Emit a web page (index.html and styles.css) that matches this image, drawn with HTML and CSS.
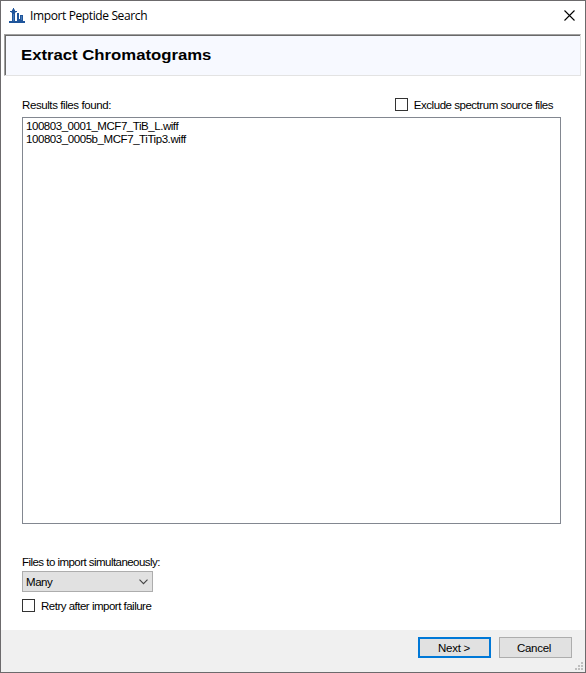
FILE: index.html
```html
<!DOCTYPE html>
<html lang="en">
<head>
<meta charset="utf-8">
<title>Import Peptide Search</title>
<link rel="stylesheet" href="styles.css">
</head>
<body>
<div class="window">
  <header class="titlebar">
    <svg class="app-icon" width="16" height="16" viewBox="0 0 16 16" fill="#1f559b">
      <path d="M4 0h1v1.500h1V3h2v1H6.500v1H6v8h2V5h2v6h1V7h3v6h2v2H0v-2h3V5h-.5V4H1V3h2V1.500h1z"/>
      <path d="M4.500 6v7M12.500 8v4" stroke="#5688c0" stroke-width=".8"/>
    </svg>
    <span class="title">Import Peptide Search</span>
    <svg class="close" width="11" height="11" viewBox="0 0 11 11"><path d="M.5.5l10 10M10.5.5l-10 10" stroke="#000" stroke-width="1.1"/></svg>
  </header>
  <div class="banner"><h1>Extract Chromatograms</h1></div>
  <main>
    <div class="list-head">
      <span class="found">Results files found:</span>
      <label class="check"><i class="box"></i><span class="exclude">Exclude spectrum source files</span></label>
    </div>
    <div class="list">
      <div class="file-a">100803_0001_MCF7_TiB_L.wiff</div>
      <div class="file-b">100803_0005b_MCF7_TiTip3.wiff</div>
    </div>
    <div class="simul"><span>Files to import simultaneously:</span></div>
    <div class="combo"><span>Many</span><svg width="9" height="6" viewBox="0 0 9 6"><path d="M.5.7l4 4 4-4" fill="none" stroke="#444" stroke-width="1.1"/></svg></div>
    <label class="check retry-row"><i class="box"></i><span class="retry">Retry after import failure</span></label>
  </main>
  <footer>
    <div class="button primary"><span>Next &gt;</span></div>
    <div class="button"><span>Cancel</span></div>
    <svg class="grip" width="8" height="8" viewBox="0 0 8 8" fill="#bfbfbf"><path d="M6 0h2v2H6zM3 3h2v2H3zM6 3h2v2H6zM0 6h2v2H0zM3 6h2v2H3zM6 6h2v2H6z"/></svg>
  </footer>
</div>
</body>
</html>
```
FILE: styles.css
```css
* { box-sizing: border-box; }
body { margin: 0; font: 11.5px/13px "Liberation Sans", Arial, sans-serif; color: #000; white-space: nowrap; }
.window { height: 673px; border: 1px solid #6c6a6c; background: #fff; display: flex; flex-direction: column; }
.titlebar { height: 33px; display: flex; align-items: center; padding: 0 10px 4px 8px; }
.app-icon { margin-top: 1px; }
.title { margin-left: 5px; padding-top: 1px; font: 12px/16px "Open Sans", sans-serif; letter-spacing: -.38px; }
.close { margin-left: auto; }
.banner { height: 42px; margin: 0 4px 0 3px; border: 1px solid; border-color: #a0a0a0 #e3e3e3 #e3e3e3 #a0a0a0; box-shadow: inset 1px 1px #696969; background: #f7f9ff; display: flex; align-items: center; padding-left: 16px; }
h1 { margin: 0; font: bold 15px/18px "Liberation Sans", Arial, sans-serif; transform: scaleX(1.114); transform-origin: left; }
main { flex: 1; padding: 22px 24px 0 21px; }
.list-head { display: flex; justify-content: space-between; height: 13px; padding-right: 8px; }
.found { letter-spacing: -.41px; padding-top: 1px; }
.exclude { letter-spacing: -.47px; padding-top: 1px; }
.file-a { letter-spacing: -.45px; }
.file-b { letter-spacing: -.43px; }
.check { display: flex; align-items: center; }
.box { width: 13px; height: 13px; border: 1px solid #333; background: #fff; margin-right: 6px; }
.list { height: 407px; margin-top: 6px; border: 1px solid #828790; padding: 2px 3px; }
.simul { margin-top: 32px; height: 13px; letter-spacing: -.54px; }
.combo { width: 131px; height: 21px; margin-top: 2px; border: 1px solid #adadad; background: #e1e1e1; display: flex; align-items: center; justify-content: space-between; padding: 0 4px 0 3px; letter-spacing: -.45px; }
.combo span { padding-top: 1px; }
.retry-row { margin-top: 7px; height: 13px; }
.retry { letter-spacing: -.5px; padding-top: 1px; }
footer { position: relative; height: 42px; background: #f0f0f0; display: flex; gap: 8px; padding: 7px 13px 0 0; justify-content: flex-end; letter-spacing: -.3px; }
.button { width: 73px; height: 21px; border: 1px solid #adadad; background: #e1e1e1; display: flex; align-items: center; justify-content: center; padding-right: 3px; }
.button span { padding-top: 1px; }
.primary { border: 2px solid #0078d7; padding-right: 1px; }
.grip { position: absolute; right: 2px; bottom: 2px; }
```
